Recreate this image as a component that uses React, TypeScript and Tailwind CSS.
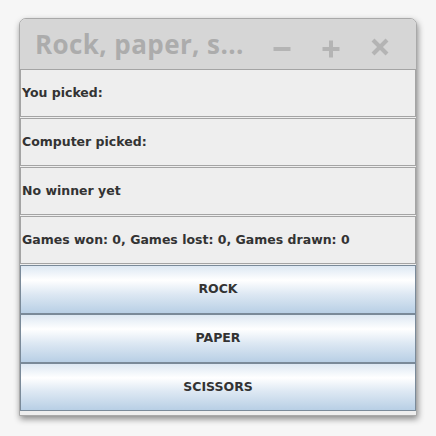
import React from "react";

const labels = [
  "You picked:",
  "Computer picked:",
  "No winner yet",
  "Games won: 0, Games lost: 0, Games drawn: 0",
];
const buttons = ["ROCK", "PAPER", "SCISSORS"];

export default function App() {
  return (
    <div className="w-[436px] h-[436px] bg-[#f6f6f6] pt-[18px] pl-[19px]">
      <div className="w-[398px] h-[398px] flex flex-col rounded-t-[7px] border border-[#a9a9a9] bg-[#eeeeee] shadow-[1px_3px_6px_rgba(0,0,0,0.45)] overflow-hidden">
        <div className="h-[50px] shrink-0 bg-[#d6d6d6] flex items-center pl-[15px] relative">
          <span
            className="text-[26px] font-bold text-[#acacac] leading-none tracking-[0.4px]"
            style={{ fontFamily: '"Open Sans", sans-serif' }}
          >
            Rock, paper, s...
          </span>
          <svg className="absolute left-[252px] top-[20px]" width="20" height="20" viewBox="0 0 20 20">
            <line x1="1.5" y1="10" x2="18.5" y2="10" stroke="#b4b4b4" strokeWidth="4" />
          </svg>
          <svg className="absolute left-[301px] top-[20px]" width="20" height="20" viewBox="0 0 20 20">
            <line x1="1.5" y1="10" x2="18.5" y2="10" stroke="#b4b4b4" strokeWidth="4" />
            <line x1="10" y1="1.5" x2="10" y2="18.5" stroke="#b4b4b4" strokeWidth="4" />
          </svg>
          <svg className="absolute left-[350px] top-[18px]" width="20" height="20" viewBox="0 0 20 20">
            <line x1="3" y1="3" x2="17" y2="17" stroke="#b4b4b4" strokeWidth="4" />
            <line x1="17" y1="3" x2="3" y2="17" stroke="#b4b4b4" strokeWidth="4" />
          </svg>
        </div>
        <div
          className="flex flex-col text-[12.5px] font-bold text-[#333333]"
          style={{ fontFamily: '"DejaVu Sans", sans-serif' }}
        >
          {labels.map((t) => (
            <div key={t} className="h-[49px] pb-px">
              <div className="h-[48px] border border-[#a4a4a4] bg-[#eeeeee] flex items-center pl-[1px]">
                {t}
              </div>
            </div>
          ))}
          {buttons.map((b, i) => (
            <div
              key={b}
              className={`${i === 2 ? "h-[48px]" : "h-[49px]"} border border-[#7a8a99] flex items-center justify-center bg-[linear-gradient(to_bottom,#dde8f3_0%,#ffffff_30%,#dde8f3_60%,#b8cfe5_100%)]`}
            >
              {b}
            </div>
          ))}
          <div className="flex-1" />
        </div>
      </div>
    </div>
  );
}
